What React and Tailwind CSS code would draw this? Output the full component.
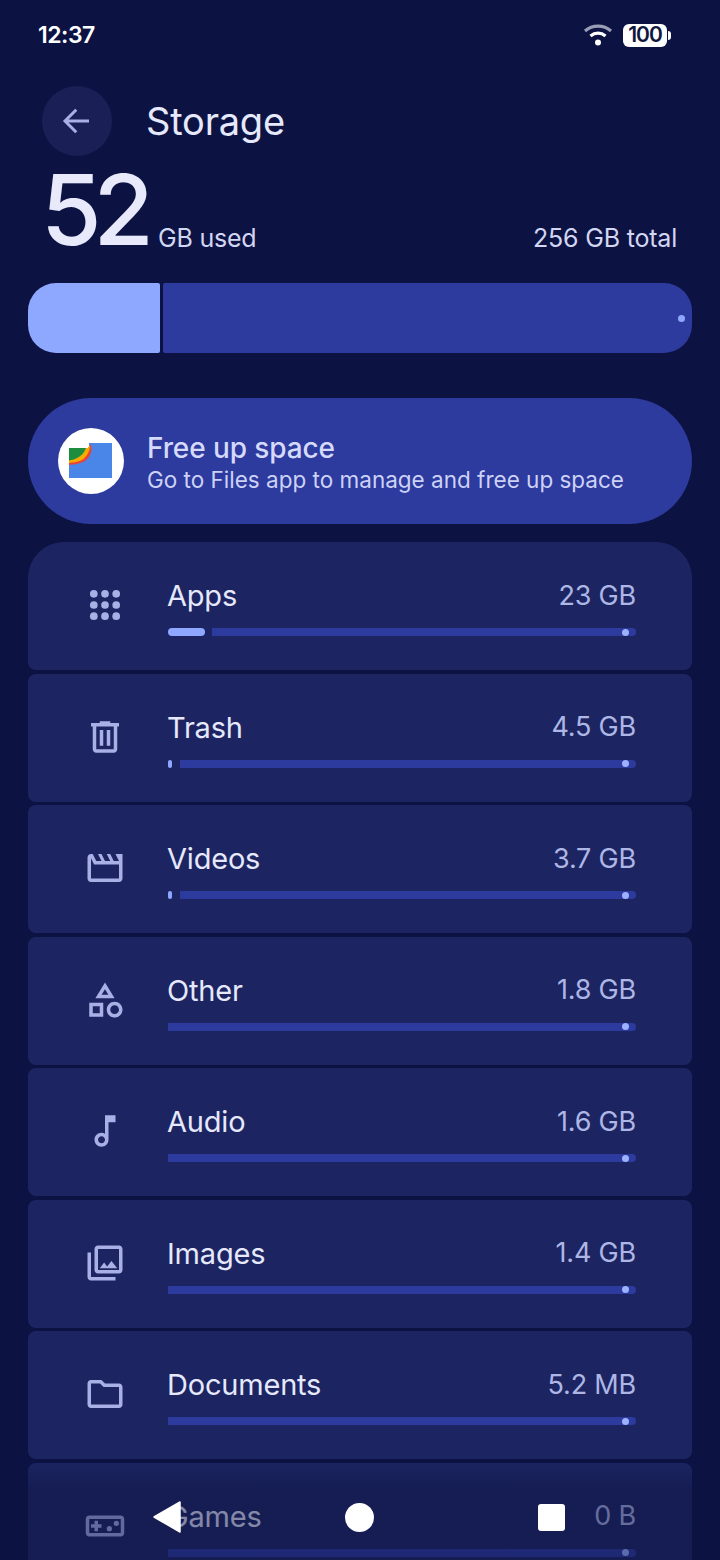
import React from 'react';

const FONT = { fontFamily: '"Inter", "Noto Sans", sans-serif' };

// Material outlined glyphs for the storage categories
const AppsIcon = () => (
    <svg viewBox="0 0 24 24" className="w-[42px] h-[42px] fill-[#a9b0e6]">
        {[5.6, 12, 18.4].map((y) =>
            [5.6, 12, 18.4].map((x) => <circle key={`${x}-${y}`} cx={x} cy={y} r="2.2" />)
        )}
    </svg>
);

const Glyph = ({ d, children }) => (
    <svg viewBox="0 0 24 24" className="w-[42px] h-[42px] fill-[#a9b0e6]">
        <path d={d} />
        {children}
    </svg>
);

const ICONS = {
    apps: <AppsIcon />,
    trash: <Glyph d="M15 4V3H9v1H4v2h1v13c0 1.1.9 2 2 2h10c1.1 0 2-.9 2-2V6h1V4h-5zm2 15H7V6h10v13zM9 8h2v9H9zm4 0h2v9h-2z" />,
    videos: <Glyph d="M4 6.47L5.76 10H20v8H4V6.47M22 4h-4l2 4h-3l-2-4h-2l2 4h-3l-2-4H8l2 4H7L5 4H4c-1.1 0-1.99.9-1.99 2L2 18c0 1.1.9 2 2 2h16c1.1 0 2-.9 2-2V4z" />,
    other: <Glyph d="M12 2l-5.5 9h11L12 2zm0 3.84L13.93 9h-3.87L12 5.84zM17.5 13c-2.49 0-4.5 2.01-4.5 4.5s2.01 4.5 4.5 4.5 4.5-2.01 4.5-4.5-2.01-4.5-4.5-4.5zm0 7c-1.38 0-2.5-1.12-2.5-2.5s1.12-2.5 2.5-2.5 2.5 1.12 2.5 2.5-1.12 2.5-2.5 2.5zM3 21.5h8v-8H3v8zm2-6h4v4H5v-4z" />,
    audio: <Glyph d="M12 3l.01 10.55c-.59-.34-1.27-.55-2-.55C7.79 13 6 14.79 6 17s1.79 4 4.01 4S14 19.21 14 17V7h4V3h-6zm-1.99 16c-1.1 0-2-.9-2-2s.9-2 2-2 2 .9 2 2-.9 2-2 2z" />,
    images: <Glyph d="M20 4v12H8V4h12m0-2H8c-1.1 0-2 .9-2 2v12c0 1.1.9 2 2 2h12c1.1 0 2-.9 2-2V4c0-1.1-.9-2-2-2zm-8.5 9.67l1.69 2.26 2.48-3.1L19 15H9zM2 6v14c0 1.1.9 2 2 2h14v-2H4V6H2z" />,
    documents: <Glyph d="M9.17 6l2 2H20v10H4V6h5.17M10 4H4c-1.1 0-1.99.9-1.99 2L2 18c0 1.1.9 2 2 2h16c1.1 0 2-.9 2-2V8c0-1.1-.9-2-2-2h-8l-2-2z" />,
    games: (
        <Glyph d="M21 6H3c-1.1 0-2 .9-2 2v8c0 1.1.9 2 2 2h18c1.1 0 2-.9 2-2V8c0-1.1-.9-2-2-2zm0 10H3V8h18v8zM6 15h2v-2h2v-2H8V9H6v2H4v2h2z">
            <circle cx="14.5" cy="13.5" r="1.5" />
            <circle cx="18.5" cy="10.5" r="1.5" />
        </Glyph>
    ),
};

const CATEGORIES = [
    { id: 'apps', label: 'Apps', value: '23 GB', used: 37, gap: 7, radius: 'rounded-t-[36px] rounded-b-[8px]' },
    { id: 'trash', label: 'Trash', value: '4.5 GB', used: 4, gap: 8 },
    { id: 'videos', label: 'Videos', value: '3.7 GB', used: 4, gap: 8 },
    { id: 'other', label: 'Other', value: '1.8 GB' },
    { id: 'audio', label: 'Audio', value: '1.6 GB' },
    { id: 'images', label: 'Images', value: '1.4 GB' },
    { id: 'documents', label: 'Documents', value: '5.2 MB' },
    { id: 'games', label: 'Games', value: '0 B' },
];

const CategoryRow = ({ id, label, value, used, gap, radius = 'rounded-[8px]' }) => (
    <div className={`flex shrink-0 items-start h-[128px] bg-[#1c2561] ${radius}`}>
        <div className="flex justify-center shrink-0 w-[42px] ml-[56px] mr-[42px] mt-[42px]">
            {ICONS[id]}
        </div>
        <div className="flex-1 mr-[56px] pt-[35px]">
            <div className="flex items-center justify-between h-[38px]">
                <span className="-ml-[1px] text-[29px] text-[#e6e8fb] tracking-[-0.2px]">{label}</span>
                <span className="text-[27px] text-[#aeb6e6] tracking-[-0.2px]">{value}</span>
            </div>
            <div className="flex items-center h-[8px] mt-[13px]">
                {used && (
                    <div
                        className="h-[8px] shrink-0 rounded-full bg-[#8fa8ff]"
                        style={{ width: used, marginRight: gap }}
                    />
                )}
                <div className="flex items-center justify-end flex-1 h-[8px] pr-[7px] rounded-r-full bg-[#2d3a9e]">
                    <div className="w-[7px] h-[7px] rounded-full bg-[#9db2ff]" />
                </div>
            </div>
        </div>
    </div>
);

const FilesLogo = () => (
    <div className="flex items-center justify-center shrink-0 w-[66px] h-[66px] rounded-full bg-white">
        <svg viewBox="0 0 44 36" className="w-[44px] h-[36px]">
            <path d="M0 5h20V0h23v35H0z" fill="#4a86e8" />
            <path d="M0 5h19l3-4c2 9-2 15-8 18-4 2-9 2.500-14 3z" fill="#ea4335" />
            <path d="M0 5h19l2-3c0 7-4 13-9 15.500-4 1.500-8 2-12 2.500z" fill="#f9ab00" />
            <path d="M0 5h17c-2 5-5 8-9 10-3 1.500-5 2-8 2.500z" fill="#1e8e3e" />
        </svg>
    </div>
);

const App = () => {
    return (
        <div className="relative flex flex-col w-[720px] h-[1560px] overflow-hidden bg-[#0c1342]" style={FONT}>
            {/* Status bar */}
            <div className="flex items-center justify-between shrink-0 h-[70px] pl-[38px] pr-[49px]">
                <span className="text-[23px] font-semibold text-white tracking-[-0.5px]">12:37</span>
                <div className="flex items-center gap-[10px]">
                    <svg viewBox="0 0 30 24" className="w-[30px] h-[24px]">
                        <path d="M2 8c7.500-6.500 18.500-6.500 26 0" fill="none" stroke="#9a9eb4" strokeWidth="3.200" />
                        <path d="M7.500 13c4.500-3.800 10.500-3.800 15 0" fill="none" stroke="#ffffff" strokeWidth="3.200" />
                        <circle cx="15" cy="19.500" r="3" fill="#ffffff" />
                    </svg>
                    <div className="flex items-center">
                        <div className="flex items-center justify-center w-[44px] h-[23px] rounded-[6px] bg-white text-[21px] font-semibold text-[#11163f] tracking-[-1px]">
                            100
                        </div>
                        <div className="w-[3px] h-[9px] ml-[1px] rounded-r-full bg-white" />
                    </div>
                </div>
            </div>

            {/* Header */}
            <div className="flex items-center shrink-0 h-[70px] mt-[16px] ml-[42px]">
                <div className="flex items-center justify-center w-[70px] h-[70px] rounded-full bg-[#1a2056]">
                    <svg viewBox="0 0 24 24" className="w-[36px] h-[36px] fill-none stroke-[#a9b0e6] stroke-2">
                        <path d="M20 12H4M11.500 4.500L4 12l7.500 7.500" />
                    </svg>
                </div>
                <span className="ml-[34px] text-[38px] text-[#e6e8fb] tracking-[-0.2px]">Storage</span>
            </div>

            {/* Usage summary */}
            <div className="flex items-end justify-between shrink-0 h-[96px] mt-[6px] pl-[41px] pr-[43px]">
                <div className="flex items-end">
                    <span className="text-[98px] leading-[96px] font-medium text-[#e8e9fb] tracking-[-8px]">52</span>
                    <span className="ml-[12px] mb-[3px] text-[25px] text-[#d3d6f2] leading-[34px] tracking-[-0.2px]">GB used</span>
                </div>
                <span className="mb-[3px] text-[25px] text-[#d3d6f2] leading-[34px] tracking-[-0.2px]">256 GB total</span>
            </div>

            {/* Usage bar */}
            <div className="flex shrink-0 h-[70px] mt-[25px] mx-[28px]">
                <div className="w-[132px] rounded-l-[28px] rounded-r-[2px] bg-[#8fa8ff]" />
                <div className="flex items-center justify-end flex-1 ml-[3px] pr-[7px] rounded-r-[28px] rounded-l-[2px] bg-[#2d3a9e]">
                    <div className="w-[7px] h-[7px] rounded-full bg-[#8fa8ff]" />
                </div>
            </div>

            {/* Free up space */}
            <div className="flex items-center shrink-0 h-[126px] mt-[45px] mx-[28px] pl-[30px] rounded-[63px] bg-[#2d3a9e]">
                <FilesLogo />
                <div className="ml-[23px] pt-[4px]">
                    <div className="text-[28px] leading-[34px] font-medium text-[#d5dafa] tracking-[-0.1px]">Free up space</div>
                    <div className="text-[22.500px] leading-[30px] text-[#ccd2f6]">Go to Files app to manage and free up space</div>
                </div>
            </div>

            {/* Categories */}
            <div className="flex flex-col gap-[3.500px] mt-[18px] mx-[28px]">
                {CATEGORIES.map((category) => (
                    <CategoryRow key={category.id} {...category} />
                ))}
            </div>

            {/* Navigation bar over the list */}
            <div className="absolute bottom-0 inset-x-0 h-[100px] bg-gradient-to-b from-[#0c1342]/0 to-[#0c1342]/45 to-[30%]">
                <svg viewBox="0 0 28 32" className="absolute left-[153px] top-[41px] w-[28px] h-[32px] fill-white">
                    <path d="M27 1v30L1 16z" stroke="#ffffff" strokeWidth="1.500" strokeLinejoin="round" />
                </svg>
                <div className="absolute left-[345px] top-[43px] w-[29px] h-[29px] rounded-full bg-white" />
                <div className="absolute left-[538px] top-[44px] w-[27px] h-[27px] rounded-[3px] bg-white" />
            </div>
        </div>
    );
};

export default App;
